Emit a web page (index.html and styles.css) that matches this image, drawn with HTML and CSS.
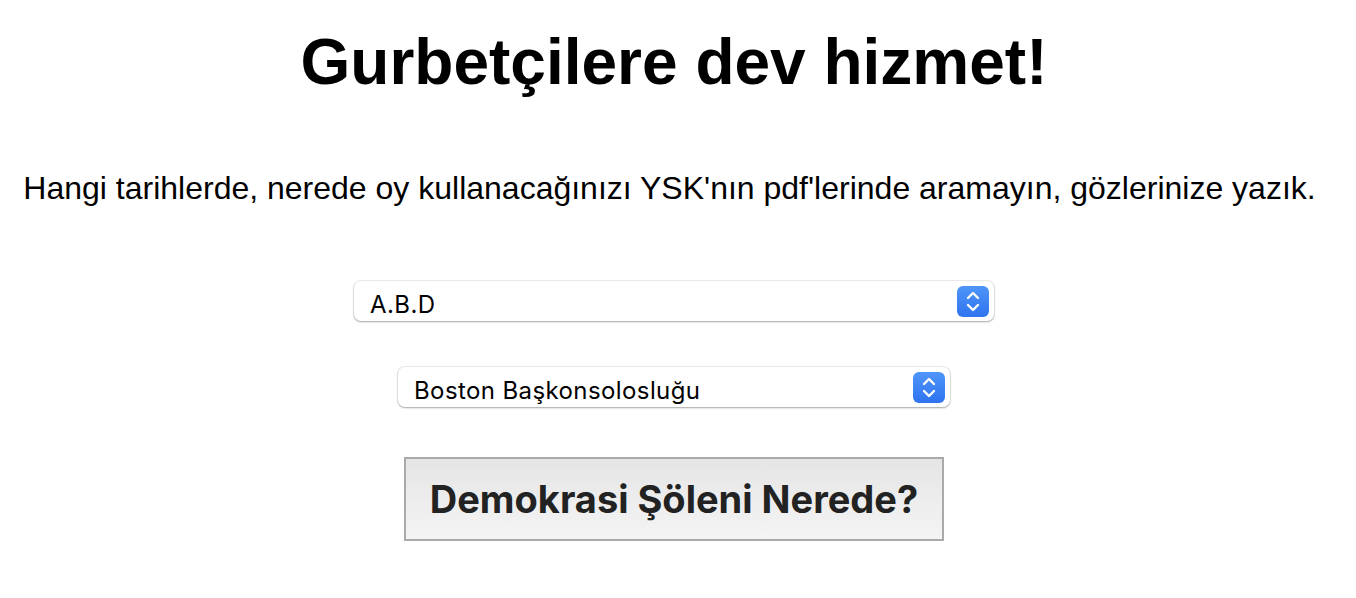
FILE: index.html
```html
<!DOCTYPE html>
<html lang="tr">
<head>
<meta charset="utf-8">
<link rel="stylesheet" href="styles.css">
</head>
<body>
<main class="page">
  <h1 class="title">Gurbetçilere dev hizmet!</h1>
  <p class="lead">Hangi tarihlerde, nerede oy kullanacağınızı YSK'nın pdf'lerinde aramayın, gözlerinize yazık.</p>
  <div class="select select-country">
    <span class="select-label">A.B.D</span>
    <span class="stepper">
      <svg viewBox="0 0 32 31" width="32" height="31"><path d="M11 12 L16 7 L21 12 M11 19 L16 24 L21 19" fill="none" stroke="#fff" stroke-width="2.4" stroke-linecap="round" stroke-linejoin="round"/></svg>
    </span>
  </div>
  <div class="select select-consulate">
    <span class="select-label">Boston Başkonsolosluğu</span>
    <span class="stepper">
      <svg viewBox="0 0 32 31" width="32" height="31"><path d="M11 12 L16 7 L21 12 M11 19 L16 24 L21 19" fill="none" stroke="#fff" stroke-width="2.4" stroke-linecap="round" stroke-linejoin="round"/></svg>
    </span>
  </div>
  <button class="go">Demokrasi Şöleni Nerede?</button>
</main>
</body>
</html>
```

FILE: styles.css
```css
html, body {
  margin: 0;
  padding: 0;
  background: #fff;
}
.page {
  display: flex;
  flex-direction: column;
  align-items: center;
  padding: 0 8px 0 0;
  font-family: "Liberation Sans", Arial, sans-serif;
  color: #000;
}
.title {
  margin: 25px 0 0;
  font-size: 64px;
  line-height: 74px;
  font-weight: bold;
}
.lead {
  margin: 71px 9px 0 0;
  font-size: 32px;
  line-height: 37px;
}
.select {
  box-sizing: border-box;
  display: flex;
  align-items: center;
  justify-content: space-between;
  height: 40px;
  padding: 0 5px 0 16px;
  background: #fff;
  border-radius: 7px;
  box-shadow: 0 0 0 1px rgba(0,0,0,0.07), 0 1px 2px rgba(0,0,0,0.3);
  font-family: Inter, Roboto, sans-serif;
  font-size: 24px;
  letter-spacing: 0.4px;
  color: #000;
}
.select-country {
  width: 640px;
  margin-top: 74px;
}
.select-consulate {
  width: 552px;
  margin-top: 46px;
}
.select-label {
  padding-top: 6px;
}
.stepper {
  display: flex;
  width: 32px;
  height: 31px;
  border-radius: 6px;
  background: linear-gradient(#4f95f8, #2f73ef);
}
.go {
  box-sizing: border-box;
  width: 540px;
  height: 84px;
  margin-top: 50px;
  border: 2px solid #aaaaaa;
  border-radius: 0;
  background: linear-gradient(#e5e5e5, #f4f4f4);
  font-family: Inter, Roboto, sans-serif;
  font-size: 38px;
  font-weight: bold;
  color: #222;
  padding: 0;
}
```
